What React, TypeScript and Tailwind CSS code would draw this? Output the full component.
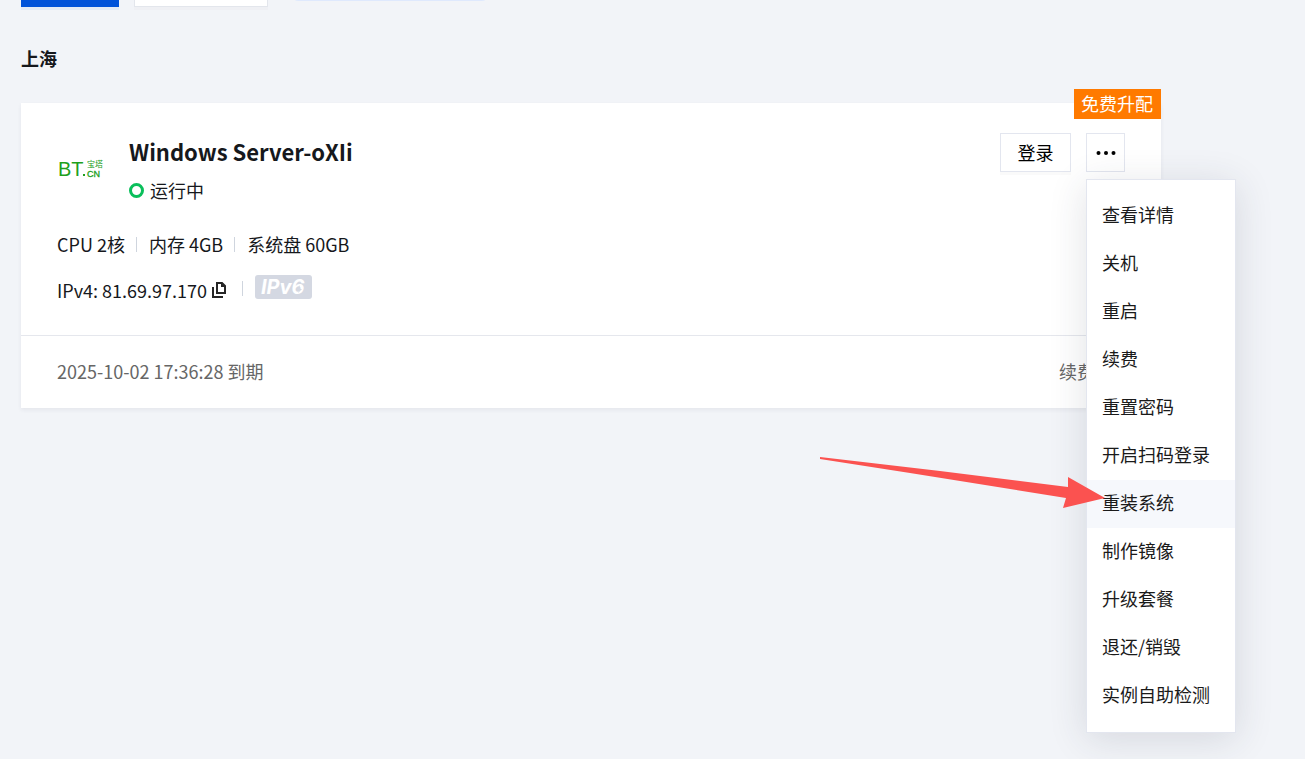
import React from "react";

const menuItems = [
  "查看详情",
  "关机",
  "重启",
  "续费",
  "重置密码",
  "开启扫码登录",
  "重装系统",
  "制作镜像",
  "升级套餐",
  "退还/销毁",
  "实例自助检测",
];

function Toolbar() {
  return (
    <div className="flex items-start -mt-8">
      <button
        type="button"
        aria-label="新建"
        className="w-[98px] h-[39px] bg-[#0052d9] shadow-[0_3px_0_#e3eaf6]"
      />
      <button
        type="button"
        aria-label="更多操作"
        className="ml-[15px] w-[134px] h-[39px] bg-white border border-[#e3e6ec] shadow-[0_3px_0_#eff0f4]"
      />
      <div className="ml-6 w-[196px] h-[33px] rounded-md bg-[#dfe9fd]" />
    </div>
  );
}

function BtLogo() {
  return (
    <svg width="48" height="48" viewBox="0 0 48 48" fill="#20a01c" fontFamily="'Liberation Sans', 'Noto Sans CJK SC', sans-serif">
      <text x="1" y="31" fontSize="20">BT</text>
      <rect x="26" y="29" width="2" height="2" />
      <text x="30" y="22" fontSize="8">宝塔</text>
      <text x="30" y="32" fontSize="9" stroke="#20a01c" strokeWidth="0.3">CN</text>
    </svg>
  );
}

function CopyIcon() {
  return (
    <svg width="16" height="16" viewBox="0 0 16 16" fill="none" stroke="#262626" strokeWidth="2">
      <path d="M5 1h5l3 3v7H5z" />
      <path d="M9 1v4h5z" fill="#262626" stroke="none" />
      <path d="M1 5v10h10" />
    </svg>
  );
}

function Ipv6Badge() {
  return (
    <svg width="57" height="24" viewBox="0 0 57 24">
      <rect width="57" height="24" rx="3" fill="#d4d8e2" />
      <text x="6" y="19" fontSize="20" fontWeight="700" fontStyle="italic" fill="#fff" fontFamily="Inter, sans-serif">
        IPv6
      </text>
      <path d="M45 10l-4 5h3l-1 3 4-4h-3z" fill="#d4d8e2" />
    </svg>
  );
}

function Divider() {
  return <span className="w-px h-[15px] ml-[11px] mr-3 bg-[#cfd5de]" />;
}

function ActionMenu() {
  return (
    <ul className="absolute z-10 top-[46px] left-0 w-[150px] py-3 bg-white border border-[#e3e6ef] shadow-[0_6px_36px_rgba(40,50,70,0.14)]">
      {menuItems.map((item) => (
        <li key={item}>
          <button
            type="button"
            className={`block w-full h-12 pl-[15px] pb-1 text-left text-[#1a1a1a] ${
              item === "重装系统" ? "bg-[#f6f8fc]" : ""
            }`}
          >
            {item}
          </button>
        </li>
      ))}
    </ul>
  );
}

function PointerArrow() {
  return (
    <svg
      className="absolute z-20 top-[457px] left-[820px] pointer-events-none"
      width="286"
      height="52"
      viewBox="0 0 286 52"
      fill="#fb5250"
    >
      <path d="M0 0L120 14L248 30V20L285 41L243 51L246 41L90 16L0 2z" />
    </svg>
  );
}

function ServerCard() {
  return (
    <section className="relative mt-[31px] bg-white shadow-[0_2px_4px_rgba(54,58,80,0.07)]">
      <span className="absolute right-0 -top-[14px] h-[30px] pl-[7px] pr-2 leading-7 bg-[#ff7a00] text-white">
        免费升配
      </span>

      <div className="px-9 py-[30px] border-b border-[#e5e7ed]">
        <div className="flex items-start justify-between">
          <div className="flex items-center gap-6">
            <BtLogo />
            <div>
              <h3 className="text-[22px] leading-9 font-bold">Windows Server-oXIi</h3>
              <div className="mt-[7px] flex items-center gap-[6px] leading-7">
                <span className="w-[15px] h-[15px] rounded-full border-[3px] border-[#0abf5b]" />
                运行中
              </div>
            </div>
          </div>

          <div className="flex gap-[15px]">
            <button
              type="button"
              className="w-[71px] h-[39px] pb-[2px] border border-[#e3e6ef] text-black shadow-[0_3px_0_#fafafa]"
            >
              登录
            </button>
            <div className="relative">
              <button
                type="button"
                aria-label="更多"
                className="flex items-center justify-center w-[39px] h-[39px] border border-[#e3e6ef]"
              >
                <svg width="20" height="4" viewBox="0 0 20 4" fill="#000">
                  <circle cx="2.5" cy="2" r="2" />
                  <circle cx="10" cy="2" r="2" />
                  <circle cx="17.5" cy="2" r="2" />
                </svg>
              </button>
              <ActionMenu />
            </div>
          </div>
        </div>

        <div className="mt-[26px] flex items-center leading-7">
          CPU 2核
          <Divider />
          内存 4GB
          <Divider />
          系统盘 60GB
        </div>

        <div className="mt-[17px] flex items-start leading-[30px]">
          IPv4: 81.69.97.170
          <button type="button" aria-label="复制" className="ml-[5px] mt-[7px]">
            <CopyIcon />
          </button>
          <span className="w-px h-[15px] mt-[6px] ml-[14px] mr-3 bg-[#cfd5de]" />
          <Ipv6Badge />
        </div>
      </div>

      <div className="flex items-center justify-between h-[72px] px-9 pb-[2px] text-[#666]">
        <span>2025-10-02 17:36:28 到期</span>
        <a href="#renew" className="mr-[30px]">
          续费
        </a>
      </div>
    </section>
  );
}

export default function App() {
  return (
    <main className="relative min-h-screen overflow-hidden pl-[21px] pr-36 bg-[#f2f4f8] text-[#16181c] text-lg font-['Noto_Sans_CJK_SC',sans-serif]">
      <Toolbar />
      <h2 className="mt-[37px] leading-7 font-bold">上海</h2>
      <ServerCard />
      <PointerArrow />
    </main>
  );
}
